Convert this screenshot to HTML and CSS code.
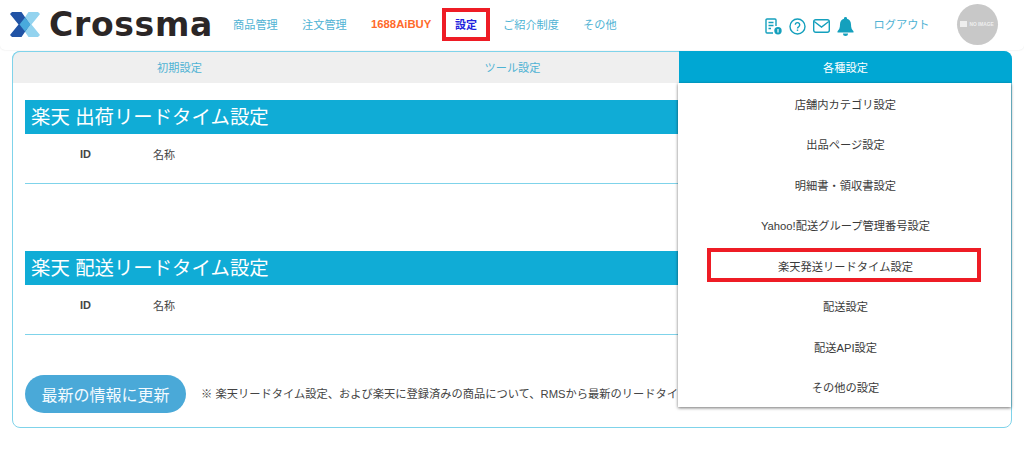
FILE: index.html
```html
<!DOCTYPE html>
<html lang="ja">
<head>
<meta charset="utf-8">
<title>Crossma</title>
<link rel="stylesheet" href="styles.css">
</head>
<body>
<header class="header">
  <div class="logo">
    <svg class="logo-mark" width="30" height="25" viewBox="0 0 30 25">
      <path fill="#93d3ef" d="M18.500 0H28l2 2-8.500 10.500L30 23l-2 2h-9.500L10 12.500z"/>
      <path fill="#2153a5" d="M2 0h9.500L20 12.500 11.500 25H2l-2-2 8.500-10.500L0 2z"/>
      <path fill="#49a9dc" d="M15 5.500l5.500 7-5.500 7-5.500-7z"/>
    </svg>
    <span class="logo-text">Crossma</span>
  </div>
  <nav class="nav">
    <a class="nav-item nav-shop">商品管理</a>
    <a class="nav-item nav-order">注文管理</a>
    <a class="nav-item nav-buy">1688AiBUY</a>
    <a class="nav-item nav-set">設定</a>
    <a class="nav-item nav-intro">ご紹介制度</a>
    <a class="nav-item">その他</a>
  </nav>
  <div class="tools">
    <svg width="17" height="17" viewBox="0 0 17 17" fill="none" stroke="#14a0bd" stroke-width="1.400">
      <path d="M8 15H2a1 1 0 0 1-1-1V2a1 1 0 0 1 1-1h8a1 1 0 0 1 1 1v6"/>
      <path d="M3.500 4.500h5M3.500 7.500h5M3.500 10.500h2.500"/>
      <circle cx="13" cy="12.800" r="3.700" fill="#14a0bd" stroke="none"/>
      <path d="M13 11v3.600" stroke="#fff" stroke-width="1.200"/>
    </svg>
    <svg width="17" height="17" viewBox="0 0 17 17" fill="none" stroke="#14a0bd" stroke-width="1.400">
      <circle cx="8.500" cy="8.500" r="7.500"/>
      <path d="M6.300 6.800a2.200 2.200 0 1 1 3.500 1.800c-.9.600-1.300 1-1.300 1.900"/>
      <path d="M8.500 11.500v1.400"/>
    </svg>
    <svg width="17" height="14" viewBox="0 0 17 14" fill="none" stroke="#14a0bd" stroke-width="1.400">
      <rect x=".700" y=".700" width="15.600" height="12.600" rx="2"/>
      <path d="M1.200 2.500l7.300 5.500 7.300-5.500"/>
    </svg>
    <svg width="17" height="19" viewBox="0 0 17 19">
      <path fill="#14a0bd" d="M8.500 0a1.500 1.500 0 0 1 1.500 1.700c2.600.7 4 3 4 5.800 0 3.500 1 5.300 2.500 6.700v1.300H.500v-1.300C2 12.800 3 11 3 7.500c0-2.800 1.400-5.100 4-5.800A1.500 1.500 0 0 1 8.500 0zM6 16.500h5a2.500 2.500 0 0 1-5 0z"/>
    </svg>
  </div>
  <a class="logout">ログアウト</a>
  <div class="avatar"><span class="avatar-icon"></span><span>NO IMAGE</span></div>
</header>

<main class="panel">
  <div class="tabs">
    <div class="tab">初期設定</div>
    <div class="tab">ツール設定</div>
    <div class="tab tab-active">各種設定</div>
  </div>
  <section class="block block-first">
    <h2 class="block-title">楽天 出荷リードタイム設定</h2>
    <div class="row"><span class="col-id">ID</span><span class="col-name">名称</span></div>
  </section>
  <section class="block block-second">
    <h2 class="block-title">楽天 配送リードタイム設定</h2>
    <div class="row"><span class="col-id">ID</span><span class="col-name">名称</span></div>
  </section>
  <div class="update">
    <button class="update-btn">最新の情報に更新</button>
    <p class="update-note">※ 楽天リードタイム設定、および楽天に登録済みの商品について、RMSから最新のリードタイム情報を取得します。</p>
  </div>
  <ul class="menu">
    <li class="menu-item">店舗内カテゴリ設定</li>
    <li class="menu-item">出品ページ設定</li>
    <li class="menu-item">明細書・領収書設定</li>
    <li class="menu-item">Yahoo!配送グループ管理番号設定</li>
    <li class="menu-item">楽天発送リードタイム設定</li>
    <li class="menu-item">配送設定</li>
    <li class="menu-item">配送API設定</li>
    <li class="menu-item">その他の設定</li>
  </ul>
</main>
<div class="mark mark-nav"></div>
<div class="mark mark-menu"></div>
</body>
</html>
```
FILE: styles.css
```css
* { box-sizing: border-box; }
html, body { margin: 0; padding: 0; }
body {
  width: 1024px;
  height: 457px;
  overflow: hidden;
  position: relative;
  background: #fff;
  color: #333;
  font-family: "Liberation Sans", "Noto Sans CJK JP", sans-serif;
  font-size: 12px;
}
.header {
  height: 50px;
  display: flex;
  align-items: center;
  padding-left: 10px;
  border-radius: 0 0 5px 5px;
  box-shadow: 0 0 2px rgba(0,0,0,.12);
}
.logo { display: flex; align-items: center; width: 223px; flex: none; }
.logo-mark { flex: none; margin-top: -1px; }
.logo-text {
  margin-left: 9px;
  font-family: "DejaVu Sans", sans-serif;
  font-weight: 700;
  font-size: 33px;
  line-height: 34px;
  letter-spacing: .7px;
  color: #2b2626;
  margin-top: -1px;
}
.nav { display: flex; align-items: center; flex: none; margin-top: -2px; }
.nav-item { color: #4fb3d4; font-size: 11.200px; white-space: nowrap; }
.nav-shop { width: 69px; }
.nav-order { width: 69px; }
.nav-buy { width: 84px; color: #ff6a2b; font-weight: 700; font-size: 11.300px; }
.nav-set { width: 48px; color: #2222dd; font-weight: 700; font-size: 11px; }
.nav-intro { width: 80px; }
.tools { display: flex; align-items: center; gap: 7px; margin-left: 148px; margin-top: 2px; }
.logout { margin-left: 20px; width: 83px; color: #4fb3d4; font-size: 11.200px; margin-top: -3px; flex: none; }
.avatar {
  width: 41px;
  height: 41px;
  border-radius: 50%;
  background: #c8c8c8;
  color: #efefef;
  font-size: 4.800px;
  font-weight: 700;
  display: flex;
  align-items: center;
  justify-content: center;
  gap: 2px;
  flex: none;
  margin-top: -2px;
  white-space: nowrap;
}
.avatar-icon { width: 7px; height: 6px; background: #eee; flex: none; }
.panel {
  position: relative;
  width: 1000px;
  height: 377px;
  margin: 1px 0 0 12px;
  border: 1px solid #7fd3ea;
  border-radius: 8px;
}
.tabs { display: flex; height: 32px; margin: -1px -1px 0; }
.tab {
  flex: 1;
  background: #efefef;
  color: #4fb3d4;
  font-size: 11.200px;
  display: flex;
  align-items: center;
  justify-content: center;
  padding-bottom: 1px;
}
.tab:first-child { border-radius: 8px 0 0 0; border-top: 1px solid #7fd3ea; border-left: 1px solid #7fd3ea; }
.tab:nth-child(2) { border-top: 1px solid #7fd3ea; }
.tab-active { background: #00a7d3; color: #fff; border-radius: 0 8px 0 0; }
.block { margin: 0 12px; border-bottom: 1px solid #7fd3ea; }
.block-first { margin-top: 17px; height: 84px; }
.block-second { margin-top: 67px; height: 84px; }
.block-title {
  margin: 0;
  height: 34px;
  padding-left: 6px;
  background: #10acd6;
  color: #fff;
  font-size: 19.400px;
  font-weight: 400;
  line-height: 35px;
}
.row { display: flex; height: 39px; align-items: center; font-size: 11px; color: #444; }
.col-id { width: 128px; padding-left: 55px; font-weight: 700; }
.col-name { flex: 1; }
.update { display: flex; align-items: center; margin: 40px 0 0 12px; white-space: nowrap; }
.update-btn {
  width: 161px;
  height: 38px;
  flex: none;
  border: 0;
  border-radius: 19px;
  background: #4aa9d8;
  color: #f4fbff;
  font: inherit;
  font-size: 16px;
}
.update-note { margin: -3px 0 0 15px; font-size: 11.250px; color: #444; }
.menu {
  position: absolute;
  top: 31px;
  left: 665px;
  width: 333px;
  height: 324px;
  margin: 0;
  padding: 0 0 0 2px;
  list-style: none;
  background: #fff;
  box-shadow: 0 1px 3px rgba(0,0,0,.55);
  display: flex;
  flex-direction: column;
}
.menu-item {
  flex: 1;
  display: flex;
  align-items: center;
  justify-content: center;
  font-size: 11.250px;
  color: #3a3a3a;
  padding-top: 1px;
}
.mark { position: absolute; border: 4px solid #ee1c25; }
.mark-nav { left: 442px; top: 8px; width: 48px; height: 33px; }
.mark-menu { left: 707px; top: 248px; width: 274px; height: 34px; }
```
